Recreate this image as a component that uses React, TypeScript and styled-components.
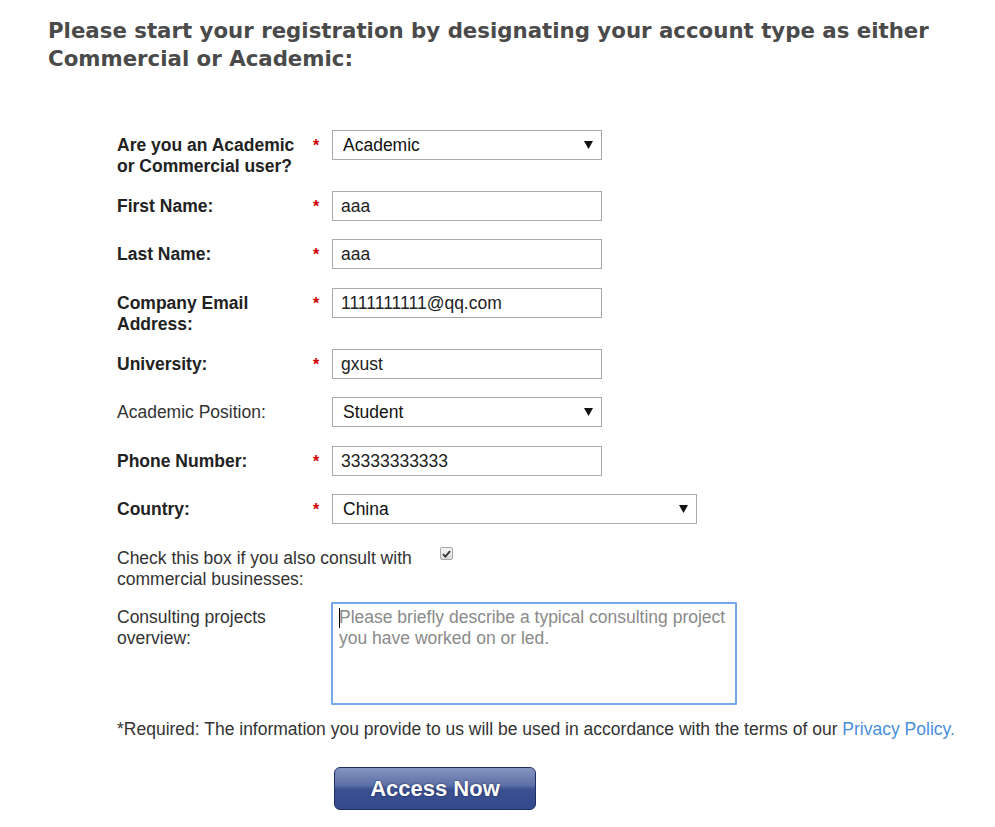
import React from "react";
import styled, { createGlobalStyle } from "styled-components";

const Global = createGlobalStyle`
  html, body { margin: 0; padding: 0; background: #fff; }
  body { font-family: "Liberation Sans", Arial, sans-serif; color: #333; }
  * { box-sizing: border-box; }
`;

const Page = styled.div`
  padding: 17px 20px 20px 48px;
`;

const Heading = styled.h1`
  margin: 0;
  width: 900px;
  font-family: "DejaVu Sans", Verdana, sans-serif;
  font-weight: bold;
  font-size: 21.3px;
  line-height: 28px;
  color: #4a4a4a;
`;

const Form = styled.form`
  margin: 57px 0 0 69px;
  font-size: 17.5px;
  line-height: 21px;
`;

const Row = styled.div<{ $wide?: boolean }>`
  display: grid;
  grid-template-columns: ${(p) => (p.$wide ? "323px auto" : "190px 25px auto")};
  align-items: start;
  padding-top: ${(p) => (p.$wide ? "1px" : "0")};
  margin-bottom: ${(p) => (p.$wide ? "12px" : "14px")};
`;

const Label = styled.label<{ $bold?: boolean }>`
  padding-top: 5px;
  font-weight: ${(p) => (p.$bold ? "bold" : "normal")};
  color: ${(p) => (p.$bold ? "#222" : "#333")};
`;

const Star = styled.span`
  padding: 5px 0 0 6px;
  color: #cc0000;
  font-weight: bold;
  font-size: 16px;
`;

const Field = styled.div`
  padding-bottom: 4.4px;
`;

const TextInput = styled.input<{ $w?: number }>`
  display: block;
  width: ${(p) => p.$w ?? 270}px;
  height: 30px;
  border: 1px solid #a9a9a9;
  padding: 1px 8px 0 8px;
  font-family: "Liberation Sans", Arial, sans-serif;
  font-size: 17.5px;
  color: #222;
  background: #fff;
  outline: none;
`;

const SelectWrap = styled.div<{ $w?: number }>`
  position: relative;
  width: ${(p) => p.$w ?? 270}px;
  height: 30px;
`;

const Select = styled.select`
  appearance: none;
  -webkit-appearance: none;
  display: block;
  width: 100%;
  height: 30px;
  border: 1px solid #a9a9a9;
  border-radius: 0;
  padding: 0 30px 0 10px;
  font-family: "Liberation Sans", Arial, sans-serif;
  font-size: 17.5px;
  color: #111;
  background: #fff;
  outline: none;
`;

const Arrow = styled.svg`
  position: absolute;
  right: 9px;
  top: 11px;
  width: 9px;
  height: 8px;
  pointer-events: none;
`;

const CheckBox = styled.span`
  display: inline-flex;
  align-items: center;
  justify-content: center;
  width: 13px;
  height: 13px;
  margin-top: 4px;
  border: 1px solid #a7a7a7;
  border-radius: 2px;
  background: linear-gradient(#f4f4f4, #dcdcdc);
`;

const TextArea = styled.textarea`
  display: block;
  width: 406px;
  height: 103px;
  margin-left: -1px;
  border: 2px solid #77a6ea;
  border-radius: 1px;
  padding: 3px 6px;
  resize: none;
  font-family: "Liberation Sans", Arial, sans-serif;
  font-size: 17.5px;
  line-height: 21px;
  color: #222;
  outline: none;
  &::placeholder {
    color: #8a8a8a;
  }
`;

const Caret = styled.span`
  position: absolute;
  left: 7px;
  top: 6px;
  width: 1px;
  height: 20px;
  background: #000;
`;

const AreaWrap = styled.div`
  position: relative;
`;

const Note = styled.p`
  margin: 0;
  white-space: nowrap;
  color: #333;
`;

const Link = styled.a`
  color: #4a8fdc;
  text-decoration: none;
`;

const ButtonRow = styled.div`
  padding: 27px 0 0 217px;
`;

const Button = styled.button`
  width: 202px;
  height: 43px;
  border: 1px solid #1f2f63;
  border-radius: 6px;
  background: linear-gradient(
    #8594c0 0%,
    #5d70a7 42%,
    #3b5091 52%,
    #334a8c 100%
  );
  color: #fff;
  font-family: "Liberation Sans", Arial, sans-serif;
  font-weight: bold;
  font-size: 22px;
  text-shadow: 0 0 2px rgba(20, 30, 70, 0.9);
  cursor: pointer;
  padding: 0;
`;

function Dropdown({ value, options, w }: { value: string; options: string[]; w?: number }) {
  return (
    <SelectWrap $w={w}>
      <Select defaultValue={value}>
        {options.map((o) => (
          <option key={o}>{o}</option>
        ))}
      </Select>
      <Arrow viewBox="0 0 9 8">
        <polygon points="0,0 9,0 4.5,8" fill="#111" />
      </Arrow>
    </SelectWrap>
  );
}

export default function App() {
  return (
    <>
      <Global />
      <Page>
        <Heading>
          Please start your registration by designating your account type as either Commercial or Academic:
        </Heading>
        <Form onSubmit={(e) => e.preventDefault()}>
          <Row>
            <Label $bold>Are you an Academic or Commercial user?</Label>
            <Star>*</Star>
            <Field>
              <Dropdown value="Academic" options={["Academic", "Commercial"]} />
            </Field>
          </Row>
          <Row>
            <Label $bold>First Name:</Label>
            <Star>*</Star>
            <Field>
              <TextInput defaultValue="aaa" />
            </Field>
          </Row>
          <Row>
            <Label $bold>Last Name:</Label>
            <Star>*</Star>
            <Field>
              <TextInput defaultValue="aaa" />
            </Field>
          </Row>
          <Row>
            <Label $bold>Company Email Address:</Label>
            <Star>*</Star>
            <Field>
              <TextInput defaultValue="1111111111@qq.com" />
            </Field>
          </Row>
          <Row>
            <Label $bold>University:</Label>
            <Star>*</Star>
            <Field>
              <TextInput defaultValue="gxust" />
            </Field>
          </Row>
          <Row>
            <Label>Academic Position:</Label>
            <span />
            <Field>
              <Dropdown value="Student" options={["Student", "Faculty", "Researcher"]} />
            </Field>
          </Row>
          <Row>
            <Label $bold>Phone Number:</Label>
            <Star>*</Star>
            <Field>
              <TextInput defaultValue="33333333333" />
            </Field>
          </Row>
          <Row>
            <Label $bold>Country:</Label>
            <Star>*</Star>
            <Field>
              <Dropdown value="China" options={["China", "United States"]} w={365} />
            </Field>
          </Row>
          <Row $wide>
            <Label>Check this box if you also consult with commercial businesses:</Label>
            <CheckBox>
              <svg width="9" height="8" viewBox="0 0 9 8">
                <path d="M1 4.2 L3.4 6.6 L8 1.2" stroke="#333" strokeWidth="1.8" fill="none" />
              </svg>
            </CheckBox>
          </Row>
          <Row>
            <Label>Consulting projects overview:</Label>
            <span />
            <AreaWrap>
              <TextArea placeholder="Please briefly describe a typical consulting project you have worked on or led." />
              <Caret />
            </AreaWrap>
          </Row>
          <Note>
            *Required: The information you provide to us will be used in accordance with the terms of our{" "}
            <Link href="#">Privacy Policy.</Link>
          </Note>
          <ButtonRow>
            <Button type="submit">Access Now</Button>
          </ButtonRow>
        </Form>
      </Page>
    </>
  );
}
